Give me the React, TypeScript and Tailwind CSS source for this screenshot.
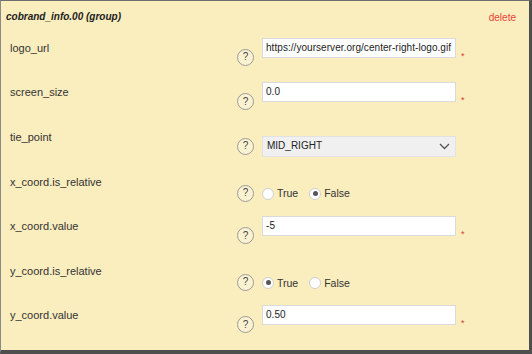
import React from "react";

const font = { fontFamily: '"Liberation Sans", Arial, sans-serif' };

function Help({ top }: { top: string }) {
  return (
    <div
      className={`w-[17px] h-[17px] rounded-full border border-[#9a9a9a] bg-[#fbf2d2] flex items-center justify-center text-[10px] leading-none text-[#444] shrink-0 ${top}`}
    >
      ?
    </div>
  );
}

function Star() {
  return <span className="ml-[5px] mt-[14px] text-[9px] leading-none text-[#e03a2f]">*</span>;
}

function Label({ text }: { text: string }) {
  return <div className="w-[236px] pl-[9px] pt-[2px] text-[11px] leading-[16px] text-[#333]">{text}</div>;
}

function InputRow({ label, value }: { label: string; value: string }) {
  return (
    <div className="flex items-start h-[45px]">
      <Label text={label} />
      <Help top="mt-[11px]" />
      <div className="ml-[8px] w-[194px] h-[20px] bg-white border border-[#dadada] text-[10px] leading-[18px] text-[#222] pl-[3px] tracking-[0.05px]">
        {value}
      </div>
      <Star />
    </div>
  );
}

function Radio({ checked, label }: { checked: boolean; label: string }) {
  return (
    <div className="flex items-center">
      <div className="w-[12px] h-[12px] rounded-full bg-white border border-[#cfcfcf] flex items-center justify-center">
        {checked && <div className="w-[5px] h-[5px] rounded-full bg-[#555]" />}
      </div>
      <span className="ml-[3px] text-[10.5px] leading-none text-[#333]">{label}</span>
    </div>
  );
}

function RadioRow({ label, trueChecked }: { label: string; trueChecked: boolean }) {
  return (
    <div className="flex items-start h-[45px]">
      <Label text={label} />
      <Help top="mt-[13px]" />
      <div className="ml-[8px] mt-[16px] h-[12px] flex items-center gap-[11px]">
        <Radio checked={trueChecked} label="True" />
        <Radio checked={!trueChecked} label="False" />
      </div>
    </div>
  );
}

function SelectRow({ label, value }: { label: string; value: string }) {
  return (
    <div className="flex items-start h-[45px]">
      <Label text={label} />
      <Help top="mt-[11px]" />
      <div className="ml-[8px] mt-[9px] w-[194px] h-[21px] bg-[#f0f0f0] border border-[#e2e2e2] flex items-center justify-between pl-[4px] pr-[5px]">
        <span className="text-[10px] leading-none text-[#222]">{value}</span>
        <svg width="11" height="7" viewBox="0 0 11 7" fill="none">
          <polyline points="1,1 5.5,5.5 10,1" stroke="#555" strokeWidth="1.3" />
        </svg>
      </div>
    </div>
  );
}

export default function App() {
  return (
    <div
      style={font}
      className="w-[532px] h-[354px] bg-[#faedbe] border-t border-t-[#6e6e6e] border-l border-l-[#8a8a8a] border-r-[3px] border-r-[#4e4e4e] border-b-[4px] border-b-[#4e4e4e] flex flex-col"
    >
      <div className="h-[37px] flex items-start justify-between pl-[5px] pr-[13px] pt-[10px]">
        <span className="text-[10px] leading-[12px] font-bold italic text-[#222]">cobrand_info.00 (group)</span>
        <span className="text-[10px] leading-[12px] mt-[1px] text-[#e8433a]">delete</span>
      </div>
      <InputRow label="logo_url" value="https://yourserver.org/center-right-logo.gif" />
      <InputRow label="screen_size" value="0.0" />
      <SelectRow label="tie_point" value="MID_RIGHT" />
      <RadioRow label="x_coord.is_relative" trueChecked={false} />
      <InputRow label="x_coord.value" value="-5" />
      <RadioRow label="y_coord.is_relative" trueChecked={true} />
      <InputRow label="y_coord.value" value="0.50" />
    </div>
  );
}
